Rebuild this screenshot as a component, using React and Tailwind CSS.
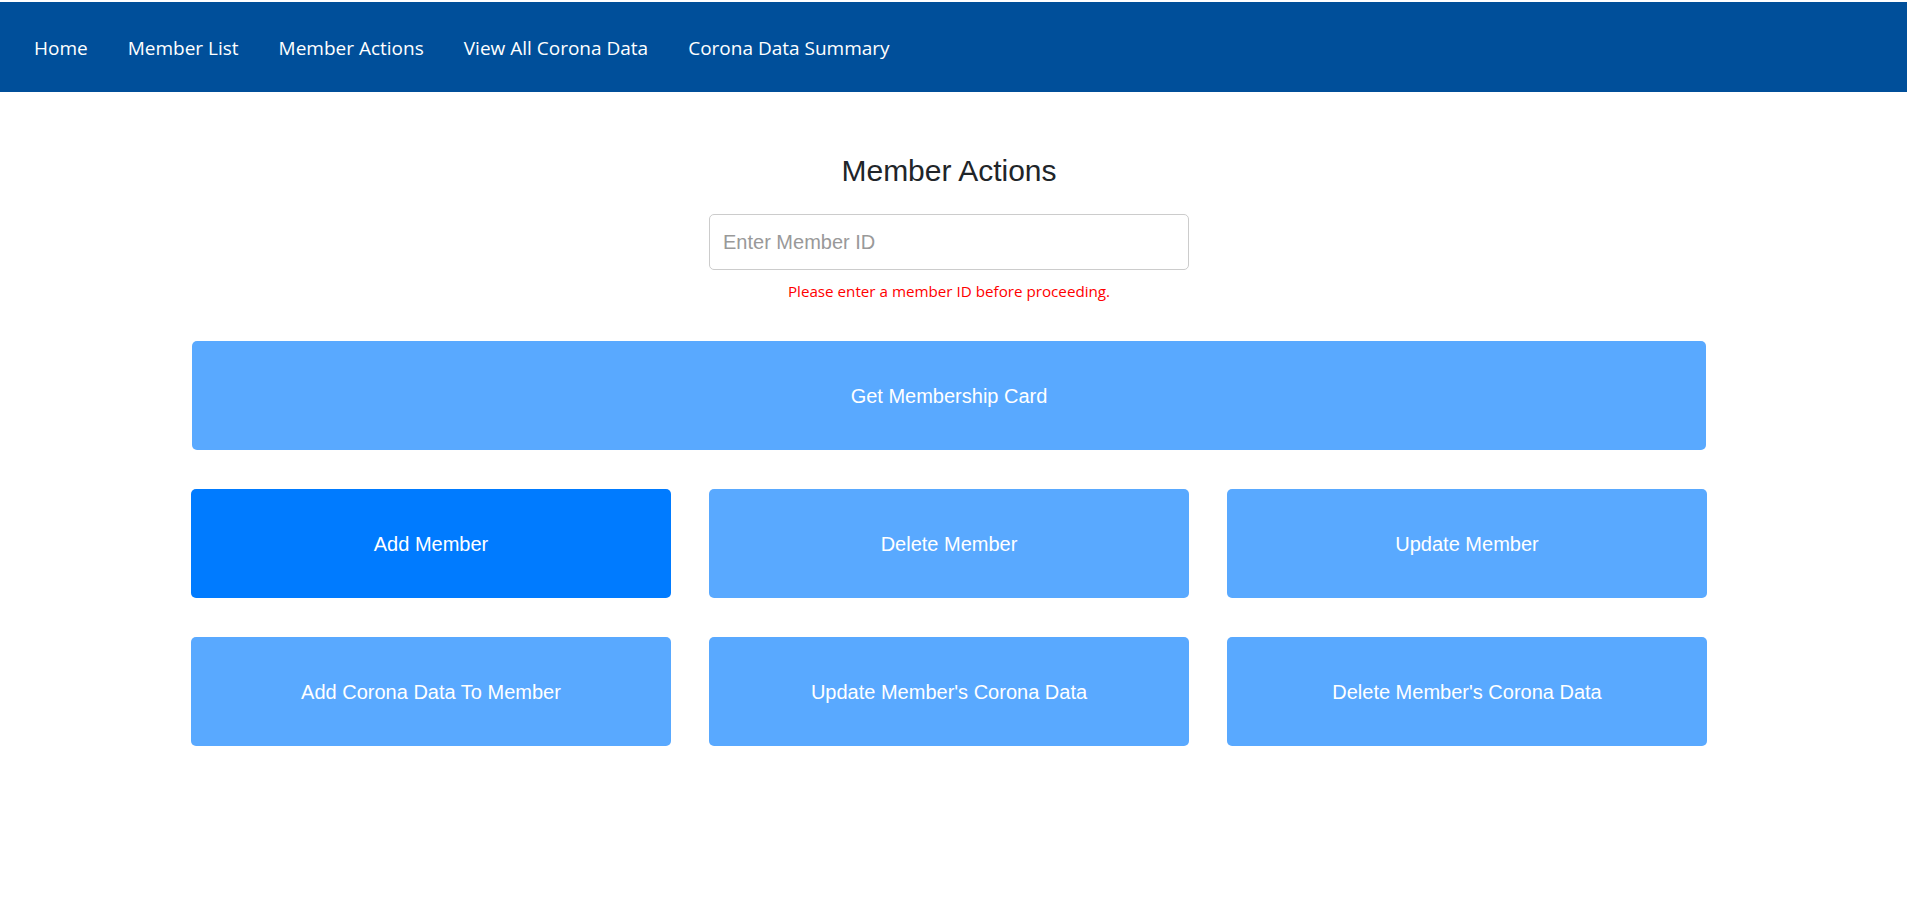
import React from "react";

const navItems = ["Home", "Member List", "Member Actions", "View All Corona Data", "Corona Data Summary"];

function ActionButton({ children, active, className = "" }) {
  return (
    <button
      type="button"
      className={
        "h-[109px] rounded-[5px] text-white text-[20px] font-['Liberation_Sans',Arial,sans-serif] flex items-center justify-center " +
        (active ? "bg-[#007bff]" : "bg-[#59a9ff]") +
        " " +
        className
      }
    >
      {children}
    </button>
  );
}

export default function App() {
  return (
    <div className="min-h-screen bg-white pt-[2px]">
      <nav className="h-[90px] bg-[#004f9a] flex items-center pl-[34px] pt-[2px] gap-[40px] font-['Open_Sans',sans-serif] text-[19px] text-white">
        {navItems.map((n) => (
          <a key={n} href="#" className="text-white">
            {n}
          </a>
        ))}
      </nav>
      <main className="pr-[9px] flex flex-col items-center">
        <h2 className="mt-[61px] text-[30px] leading-9 text-[#212529] font-['Liberation_Sans',Arial,sans-serif]">
          Member Actions
        </h2>
        <input
          type="text"
          placeholder="Enter Member ID"
          className="mt-[25px] w-[480px] h-[56px] border border-[#cccccc] rounded-[5px] px-[13px] text-[20px] text-[#333] placeholder:text-[#999999] font-['Liberation_Sans',Arial,sans-serif] outline-none"
        />
        <p className="mt-[11px] text-[15.2px] leading-[20px] text-[#ff0000] font-['Open_Sans',sans-serif]">
          Please enter a member ID before proceeding.
        </p>
        <div className="w-[1516px] mt-[40px] flex flex-col gap-[39px]">
          <ActionButton className="mx-px">Get Membership Card</ActionButton>
          <div className="grid grid-cols-3 gap-x-[38px] gap-y-[39px]">
            <ActionButton active>Add Member</ActionButton>
            <ActionButton>Delete Member</ActionButton>
            <ActionButton>Update Member</ActionButton>
            <ActionButton>Add Corona Data To Member</ActionButton>
            <ActionButton>Update Member's Corona Data</ActionButton>
            <ActionButton>Delete Member's Corona Data</ActionButton>
          </div>
        </div>
      </main>
    </div>
  );
}
